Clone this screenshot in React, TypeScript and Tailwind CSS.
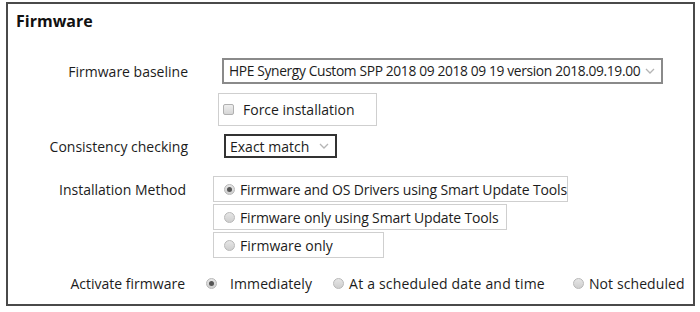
import React from "react";

const Chevron = () => (
  <svg width="10" height="6" viewBox="0 0 10 6" className="shrink-0">
    <polyline points="1,1 5,5 9,1" fill="none" stroke="#b5b5b5" strokeWidth="1.3" />
  </svg>
);

const Radio = ({ checked }: { checked?: boolean }) => (
  <span className="inline-flex h-[11px] w-[11px] shrink-0 items-center justify-center rounded-full border border-[#b8b8b8] bg-gradient-to-b from-[#e6e6e6] to-[#cfcfcf]">
    {checked && <span className="h-[5px] w-[5px] rounded-full bg-[#555]" />}
  </span>
);

export default function App() {
  return (
    <div className="h-[312px] w-[700px] bg-white pl-[6px] pt-[2px] text-[#1c1c1c]" style={{ fontFamily: '"Open Sans", "Noto Sans", sans-serif' }}>
      <div className="h-[304px] w-[689px] border-2 border-[#4a4a4a] whitespace-nowrap">
        <div className="pl-[8px] pt-[6px] text-[16px] font-bold leading-[22px] text-[#111]">Firmware</div>

        <div className="mt-[26px] flex items-center">
          <div className="w-[180px] text-right text-[14px]">Firmware baseline</div>
          <div className="ml-[34px] flex h-[26px] w-[441px] items-center justify-between border-2 border-[#8a8a8a] pl-[5px] pr-[6px] text-[13.8px] tracking-[-0.36px]">
            <span>HPE Synergy Custom SPP 2018 09 2018 09 19 version 2018.09.19.00</span>
            <Chevron />
          </div>
        </div>

        <div className="mt-[9px] flex">
          <div className="w-[180px]" />
          <div className="ml-[30px] flex h-[33px] w-[159px] items-center border border-[#cfcfcf] pl-[4px] text-[14px]">
            <span className="h-[11px] w-[11px] rounded-[2px] border border-[#b0b0b0] bg-gradient-to-b from-[#eeeeee] to-[#d6d6d6]" />
            <span className="ml-[9px]">Force installation</span>
          </div>
        </div>

        <div className="mt-[8px] flex items-center">
          <div className="w-[180px] text-right text-[14px]">Consistency checking</div>
          <div className="ml-[36px] flex h-[24px] w-[113px] items-center justify-between border-2 border-[#333] pl-[4px] pr-[6px] text-[14px]">
            <span>Exact match</span>
            <Chevron />
          </div>
        </div>

        <div className="mt-[18px] flex items-start">
          <div className="flex h-[26px] w-[178px] items-center justify-end text-[14px]">Installation Method</div>
          <div className="ml-[27px] flex flex-col gap-[2px] text-[14px]">
            <div className="flex h-[26px] w-[355px] items-center border border-[#cfcfcf] pl-[10px] tracking-[-0.15px]">
              <Radio checked />
              <span className="ml-[5px]">Firmware and OS Drivers using Smart Update Tools</span>
            </div>
            <div className="flex h-[26px] w-[294px] items-center border border-[#cfcfcf] pl-[10px] tracking-[-0.15px]">
              <Radio />
              <span className="ml-[5px]">Firmware only using Smart Update Tools</span>
            </div>
            <div className="flex h-[26px] w-[171px] items-center border border-[#cfcfcf] pl-[10px]">
              <Radio />
              <span className="ml-[5px]">Firmware only</span>
            </div>
          </div>
        </div>

        <div className="mt-[13px] flex h-[24px] items-center text-[14px]">
          <div className="w-[177px] text-right">Activate firmware</div>
          <div className="ml-[21px] flex items-center">
            <Radio checked />
            <span className="ml-[13px] tracking-[0.1px]">Immediately</span>
          </div>
          <div className="ml-[21px] flex items-center">
            <Radio />
            <span className="ml-[5px] tracking-[0.2px]">At a scheduled date and time</span>
          </div>
          <div className="ml-[28px] flex items-center">
            <Radio />
            <span className="ml-[5px] tracking-[0.1px]">Not scheduled</span>
          </div>
        </div>
      </div>
    </div>
  );
}
